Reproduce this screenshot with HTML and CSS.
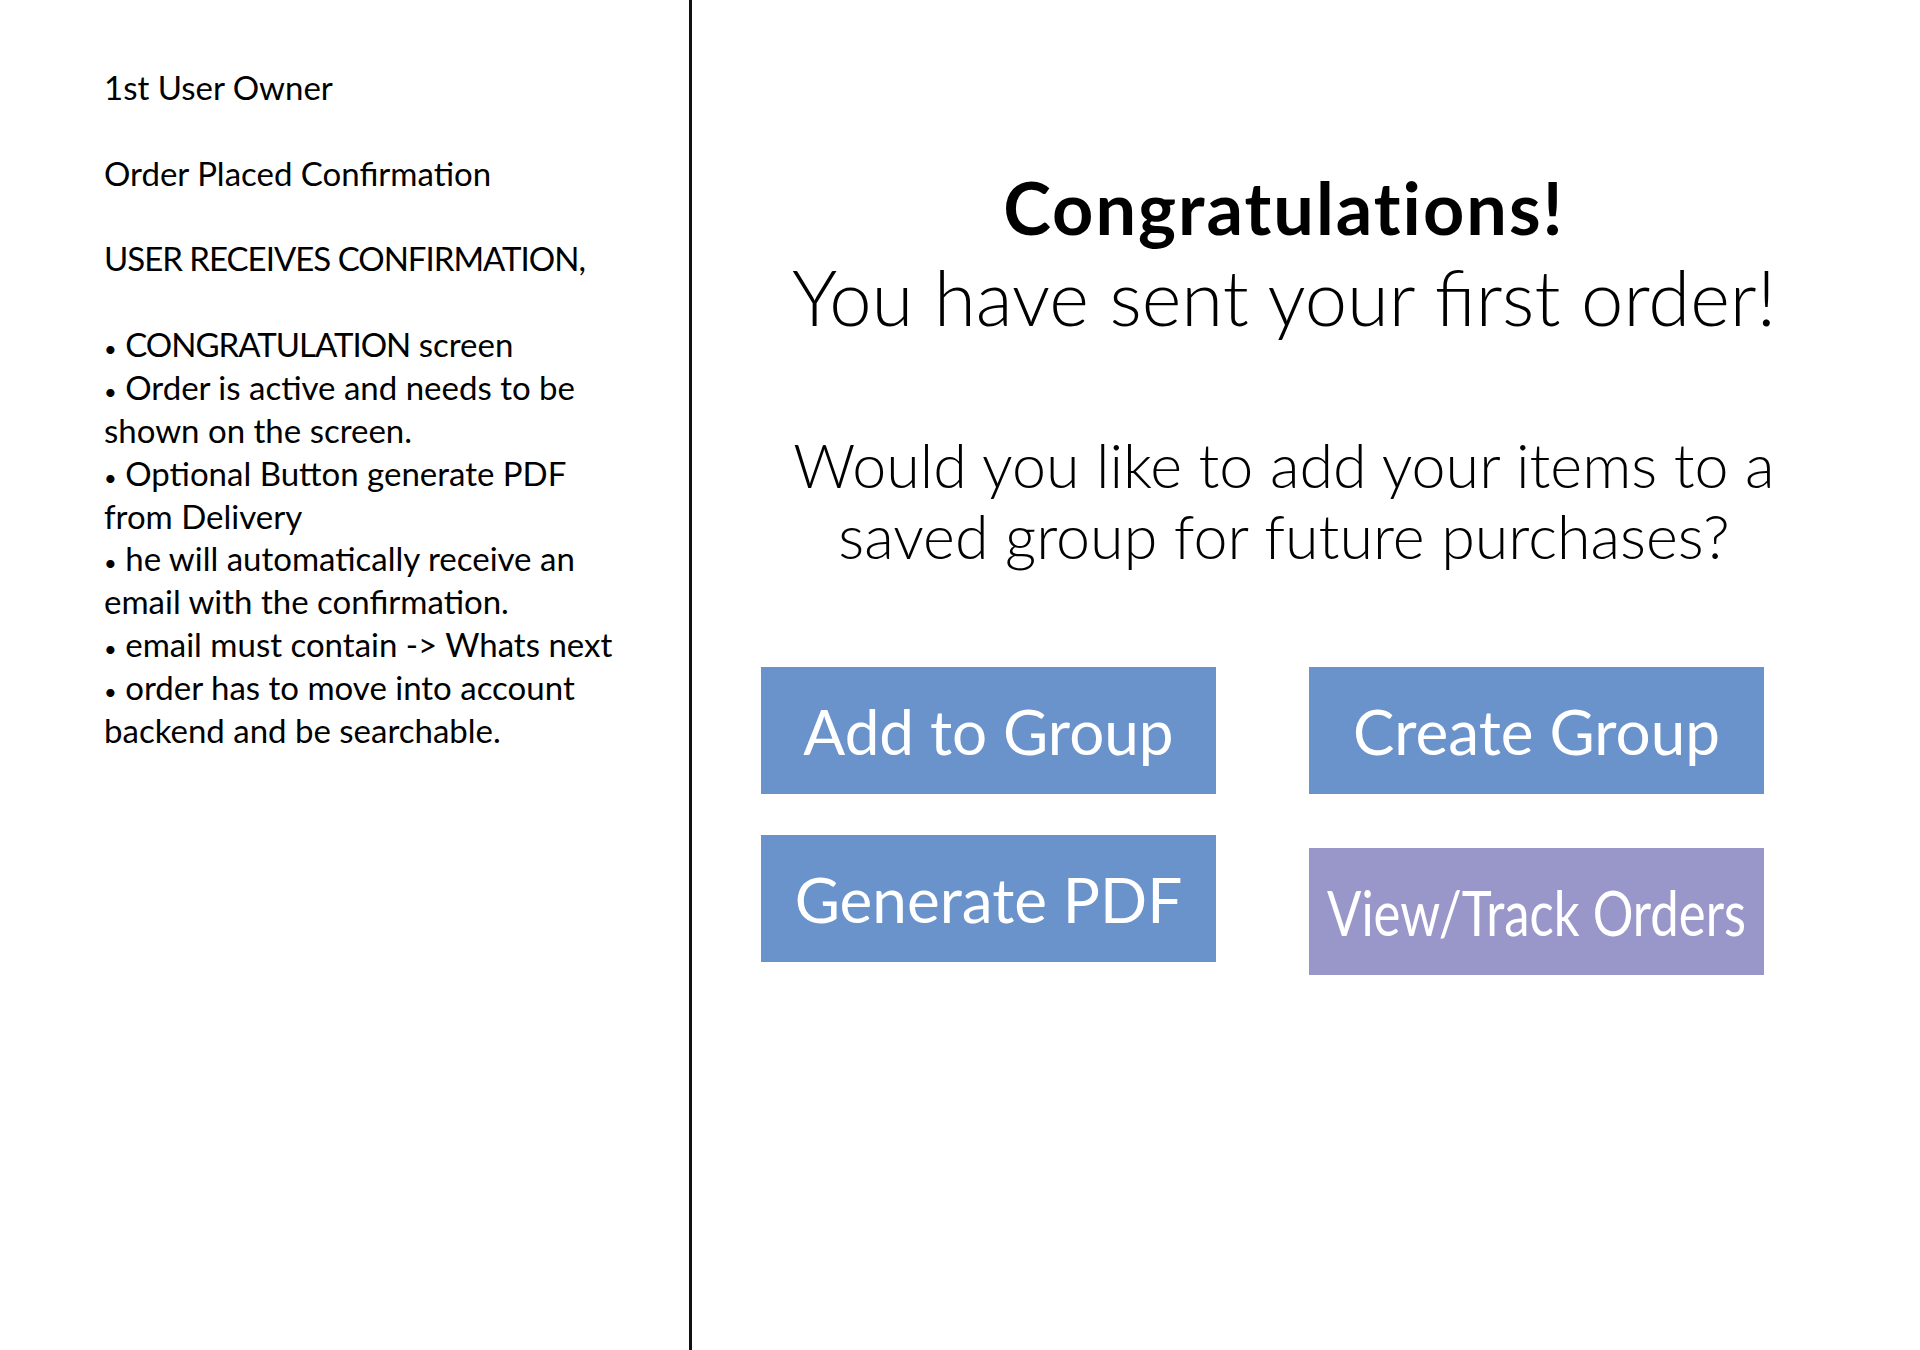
FILE: index.html
```html
<!DOCTYPE html>
<html lang="en">
<head>
    <meta charset="UTF-8">
    <title>Order Placed Confirmation</title>
    <link rel="stylesheet" href="styles.css">
</head>
<body>
    <div class="page">
        <div class="notes">
            <p>1st User Owner</p>
            <p>Order Placed Confirmation</p>
            <p><span class="caps">USER RECEIVES CONFIRMATION,</span></p>
            <p>
                <span class="dot">•</span> <span class="caps">CONGRATULATION</span> screen<br>
                <span class="dot">•</span> Order is active and needs to be<br>
                shown on the screen.<br>
                <span class="dot">•</span> Optional Button generate PDF<br>
                from Delivery<br>
                <span class="dot">•</span> he will automatically receive an<br>
                email with the confirmation.<br>
                <span class="dot">•</span> email must contain -&gt; Whats next<br>
                <span class="dot">•</span> order has to move into account<br>
                backend and be searchable.
            </p>
        </div>
        <div class="screen">
            <div class="message">
                <h1 class="title">Congratulations!</h1>
                <div class="subtitle">You have sent your first order!</div>
                <div class="question">Would you like to add your items to a<br>saved group for future purchases?</div>
            </div>
            <div class="actions">
                <button class="btn btn-blue">Add to Group</button>
                <button class="btn btn-blue">Create Group</button>
                <button class="btn btn-blue">Generate PDF</button>
                <button class="btn btn-purple btn-track"><span>View/Track Orders</span></button>
            </div>
        </div>
    </div>
</body>
</html>
```

FILE: styles.css
```css
body {
    margin: 0;
    background: #fff;
    color: #000;
}
.page {
    display: flex;
    min-height: 1350px;
}
.notes {
    width: 585px;
    padding: 66px 0 0 104px;
    border-right: 3px solid #111;
    font-family: Lato, "Open Sans", sans-serif;
    font-size: 33px;
    line-height: 42.86px;
}
.notes p {
    margin: 0 0 42.86px 0;
}
.notes .dot {
    font-size: 22px;
    line-height: 0;
}
.notes .caps {
    letter-spacing: -1px;
}
.screen {
    flex: 1;
    padding-left: 69px;
}
.message {
    width: 1046px;
    text-align: center;
    font-family: Lato, sans-serif;
}
.title {
    margin: 162px 0 0 0;
    font-size: 72px;
    font-weight: bold;
    letter-spacing: 2px;
    line-height: 90px;
}
.subtitle {
    font-size: 76px;
    font-weight: 300;
    line-height: 90px;
}
.question {
    margin-top: 87px;
    font-size: 61px;
    font-weight: 300;
    line-height: 71px;
}
.actions {
    display: grid;
    grid-template-columns: 455px 455px;
    column-gap: 93px;
    row-gap: 41px;
    margin-top: 96px;
    align-items: start;
}
.btn {
    height: 127px;
    display: flex;
    align-items: center;
    justify-content: center;
    border: none;
    color: #fff;
    font-family: Lato, sans-serif;
    font-size: 62px;
    padding: 0;
    cursor: pointer;
}
.btn-blue { background: #6a93cc; }
.btn-purple { background: #9997ca; }
.btn-track {
    margin-top: 13px;
    overflow: hidden;
}
.btn-track span {
    flex: none;
    transform: scaleX(0.82);
    white-space: nowrap;
}
```
